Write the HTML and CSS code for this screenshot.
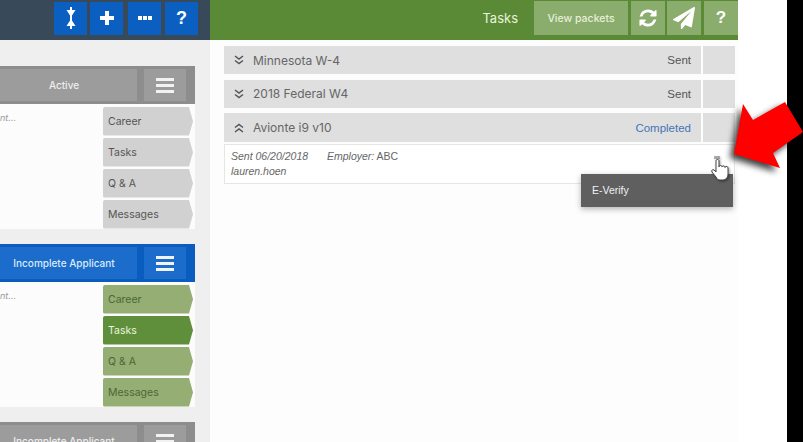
FILE: index.html
```html
<!DOCTYPE html>
<html lang="en">
<head>
    <meta charset="UTF-8">
    <title>Tasks</title>
    <link rel="stylesheet" href="styles.css">
</head>
<body>
    <div class="page">
        <section class="left">
            <div class="bar bar_left">
                <button class="btn_blue">
                    <svg width="12" height="22" viewBox="0 0 12 22"><path d="M6 0v22" stroke="#fff" stroke-width="2"/><path d="M1.500 3h9L6 10zM1.500 19h9L6 12z" fill="#fff"/></svg>
                </button>
                <button class="btn_blue">
                    <svg width="16" height="16" viewBox="0 0 16 16"><path d="M8 1v14M1 8h14" stroke="#fff" stroke-width="4"/></svg>
                </button>
                <button class="btn_blue btn_dots">
                    <svg width="14" height="6" viewBox="0 0 14 6"><path d="M0 1h4v4H0zM5 1h4v4H5zM10 1h4v4h-4z" fill="#fff"/></svg>
                </button>
                <button class="btn_blue btn_help">?</button>
            </div>
            <div class="cards">
                <div class="card">
                    <div class="card_head">
                        <div class="card_label">Active</div>
                        <div class="card_menu"><i></i><i></i><i></i></div>
                    </div>
                    <div class="card_body">
                        <p class="card_note">nt...</p>
                        <div class="tabs">
                            <div class="tab">Career</div>
                            <div class="tab">Tasks</div>
                            <div class="tab">Q &amp; A</div>
                            <div class="tab">Messages</div>
                        </div>
                    </div>
                </div>
                <div class="card card_blue">
                    <div class="card_head">
                        <div class="card_label">Incomplete Applicant</div>
                        <div class="card_menu"><i></i><i></i><i></i></div>
                    </div>
                    <div class="card_body">
                        <p class="card_note">nt...</p>
                        <div class="tabs tabs_green">
                            <div class="tab">Career</div>
                            <div class="tab tab_on">Tasks</div>
                            <div class="tab">Q &amp; A</div>
                            <div class="tab">Messages</div>
                        </div>
                    </div>
                </div>
                <div class="card">
                    <div class="card_head">
                        <div class="card_label">Incomplete Applicant</div>
                        <div class="card_menu"><i></i><i></i><i></i></div>
                    </div>
                </div>
            </div>
        </section>

        <section class="right">
            <div class="bar bar_right">
                <span class="bar_title">Tasks</span>
                <button class="btn_green btn_wide">View packets</button>
                <button class="btn_green btn_refresh">
                    <svg width="20" height="20" viewBox="0 0 1792 1792"><path fill="#fff" d="M1639 1056q0 5-1 7-64 268-268 434.500t-478 166.500q-146 0-282.500-55t-243.500-157l-129 129q-19 19-45 19t-45-19-19-45v-448q0-26 19-45t45-19h448q26 0 45 19t19 45-19 45l-137 137q71 66 161 102t187 36q134 0 250-65t186-179q11-17 53-117 8-23 30-23h192q13 0 22.500 9.500t9.500 22.500zm25-800v448q0 26-19 45t-45 19h-448q-26 0-45-19t-19-45 19-45l138-138q-148-137-349-137-134 0-250 65t-186 179q-11 17-53 117-8 23-30 23h-199q-13 0-22.500-9.500t-9.500-22.500v-7q65-268 270-434.500t480-166.500q146 0 284 55.500t245 156.500l130-129q19-19 45-19t45 19 19 45z"/></svg>
                </button>
                <button class="btn_green">
                    <svg width="22" height="22" viewBox="0 0 1792 1792"><path fill="#fff" d="M1764 11q33 24 27 64l-256 1536q-5 29-32 45-14 8-31 8-11 0-24-5l-453-185-242 295q-18 23-49 23-13 0-22-4-19-7-30.500-23.500t-11.500-36.500v-349l864-1059-1069 925-395-162q-37-14-40-55-2-40 32-59l1664-960q15-9 32-9 20 0 36 11z"/></svg>
                </button>
                <button class="btn_green">?</button>
            </div>
            <div class="packets">
                <div class="row">
                    <div class="row_main">
                        <svg class="chev" width="10" height="10" viewBox="0 0 10 10"><path d="M1 1l4 3 4-3M1 5.500l4 3 4-3" fill="none" stroke="#555" stroke-width="1.500"/></svg>
                        <span class="row_name">Minnesota W-4</span>
                        <span class="row_state">Sent</span>
                    </div>
                    <div class="row_side"></div>
                </div>
                <div class="row">
                    <div class="row_main">
                        <svg class="chev" width="10" height="10" viewBox="0 0 10 10"><path d="M1 1l4 3 4-3M1 5.500l4 3 4-3" fill="none" stroke="#555" stroke-width="1.500"/></svg>
                        <span class="row_name">2018 Federal W4</span>
                        <span class="row_state">Sent</span>
                    </div>
                    <div class="row_side"></div>
                </div>
                <div class="row">
                    <div class="row_main">
                        <svg class="chev" width="10" height="10" viewBox="0 0 10 10"><path d="M1 4.500l4-3 4 3M1 9l4-3 4 3" fill="none" stroke="#555" stroke-width="1.500"/></svg>
                        <span class="row_name">Avionte i9 v10</span>
                        <span class="row_state state_done">Completed</span>
                    </div>
                    <div class="row_side"></div>
                </div>
                <div class="detail">
                    <div class="detail_line">
                        <em>Sent 06/20/2018</em>
                        <span class="employer"><em>Employer:</em> ABC</span>
                    </div>
                    <div class="detail_line"><em>lauren.hoen</em></div>
                    <div class="dropdown">E-Verify</div>
                </div>
            </div>
        </section>

        <div class="margin"></div>
        <div class="black"></div>

        <!-- arrow and cursor from the recording, they sit on top of the page -->
        <svg class="arrow" width="72" height="70" viewBox="0 0 72 70"><path fill="#f00" d="M3 52L12 2 22 18 54 0 72 30 42 51 49 66z"/></svg>
        <svg class="hand" width="20" height="26" viewBox="0 0 20 26">
            <path d="M3 0h6M3 2h6" stroke="#666" stroke-width="1"/>
            <path fill="#fff" stroke="#444" stroke-width="1" d="M5 5c0-2 3-2 3 0v6c0-2 3-2 3 0 0-1.500 3-1.500 3 .5 0-1.500 3-1.500 3 .5v6c0 3-2 6-5 6H9c-2 0-3-1-4-3l-4-5c-1-2 1-3 2-2l2 2z"/>
        </svg>
    </div>
</body>
</html>
```

FILE: styles.css
```css
*{
    margin: 0;
    padding: 0;
    box-sizing: border-box;
}

body{
    background: #fff;
    font-family: 'Inter', 'Liberation Sans', sans-serif;
    overflow: hidden;
}

button{
    border: 0;
    font-family: 'Liberation Sans', sans-serif;
}

.page{
    position: relative;
    display: grid;
    grid-template-columns: 210px 528px 49px 16px;
    width: 803px;
    height: 442px;
    overflow: hidden;
}

.bar{
    display: flex;
    align-items: center;
    height: 40px;
    padding-bottom: 4px;
}

/* left column */
.left{
    background: #efefef;
    overflow: hidden;
}

.bar_left{
    justify-content: flex-end;
    gap: 3px;
    padding-right: 12px;
    background: #38495a;
}

.btn_blue{
    display: flex;
    align-items: center;
    justify-content: center;
    width: 33px;
    height: 33px;
    background: #0a5fc0;
    color: #fff;
    font-size: 18px;
    font-weight: bold;
}

.btn_dots{
    margin-left: 2px;
}

.btn_help{
    margin-left: 1px;
}

.cards{
    display: flex;
    flex-direction: column;
    gap: 15px;
    width: 204px;
    margin-left: -9px;
    padding-top: 26px;
}

.card{
    background: #fcfcfd;
}

.card_head{
    display: flex;
    gap: 7px;
    height: 38px;
    padding: 3px 9px 3px 0;
    background: #8d8d8d;
}

.card_label{
    display: flex;
    align-items: center;
    justify-content: center;
    flex: 1;
    background: #9c9c9c;
    color: #eee;
    font-size: 10px;
    font-weight: 500;
}

.card_menu{
    display: flex;
    flex-direction: column;
    justify-content: center;
    gap: 3px;
    width: 42px;
    padding: 0 12px;
    background: #9c9c9c;
}

.card_menu i{
    display: block;
    height: 3px;
    background: #f2f2f2;
}

.card_blue .card_head{
    background: #0a5dbf;
}

.card_blue .card_label,
.card_blue .card_menu{
    background: #1b6ccb;
}

.card_blue .card_label{
    color: #dcebfb;
}

.card_body{
    display: flex;
    justify-content: space-between;
    height: 125px;
    padding: 3px 2px 0 0;
}

.card_note{
    padding: 5px 0 0 9px;
    color: #999;
    font-size: 9px;
    font-style: italic;
}

.tabs{
    display: flex;
    flex-direction: column;
    gap: 2.500px;
    width: 90px;
}

.tab{
    display: flex;
    align-items: center;
    height: 28.500px;
    padding-left: 5px;
    background: #d1d1d1;
    color: #555;
    font-size: 10.500px;
    clip-path: polygon(0 0, 86px 0, 100% 50%, 86px 100%, 0 100%);
    border-radius: 2px 0 0 2px;
}

.tabs_green .tab{
    background: #94ae74;
    color: #4b6738;
}

.tabs_green .tab_on{
    background: #5f8f3a;
    color: #eaf4de;
}

/* right column */
.right{
    background: #fdfdfe;
}

.bar_right{
    justify-content: flex-end;
    gap: 3px;
    background: #5a8a35;
}

.bar_title{
    margin-right: 13px;
    color: #e8f2dd;
    font-size: 13px;
}

.btn_green{
    display: flex;
    align-items: center;
    justify-content: center;
    width: 34px;
    height: 34px;
    background: #8aac6c;
    color: #fff;
    font-size: 17px;
    font-weight: bold;
}

.btn_wide{
    width: 94px;
    color: #e6efdb;
    font-family: 'Inter', sans-serif;
    font-size: 10.500px;
    font-weight: 500;
}

.btn_refresh{
    margin-right: -1px;
}

.packets{
    display: flex;
    flex-direction: column;
    gap: 5.300px;
    padding: 6px 3px 0 14px;
}

.row{
    display: flex;
    gap: 2px;
    height: 28.400px;
}

.row_main{
    display: flex;
    align-items: center;
    flex: 1;
    padding: 0 10px;
    background: #dfdfdf;
}

.row_side{
    width: 32px;
    background: #dfdfdf;
}

.chev{
    margin-right: 9px;
}

.row_name{
    flex: 1;
    color: #666;
    font-size: 12px;
}

.row_state{
    color: #555;
    font-family: 'Liberation Sans', sans-serif;
    font-size: 11.500px;
}

.state_done{
    color: #3f76b5;
}

.detail{
    position: relative;
    height: 40px;
    margin-top: -3px;
    padding: 4px 6px;
    border: 1px solid #e6e6e6;
    background: #fff;
    color: #666;
    font-family: 'Liberation Sans', sans-serif;
    font-size: 10.500px;
    line-height: 15px;
}

.employer{
    margin-left: 16px;
}

.dropdown{
    position: absolute;
    top: 29px;
    right: 1px;
    display: flex;
    align-items: center;
    width: 152px;
    height: 33px;
    padding-left: 11px;
    background: #5f5f5f;
    box-shadow: 0 2px 6px rgba(0, 0, 0, 0.3);
    color: #f0f0f0;
}

.margin{
    background: #fff;
}

.black{
    background: #000;
}

.arrow{
    position: absolute;
    top: 102px;
    left: 731px;
    filter: drop-shadow(-4px 4px 3px rgba(0, 0, 0, 0.75));
}

.hand{
    position: absolute;
    top: 156px;
    left: 711px;
    filter: drop-shadow(1px 1px 1px rgba(0, 0, 0, 0.4));
}
```
